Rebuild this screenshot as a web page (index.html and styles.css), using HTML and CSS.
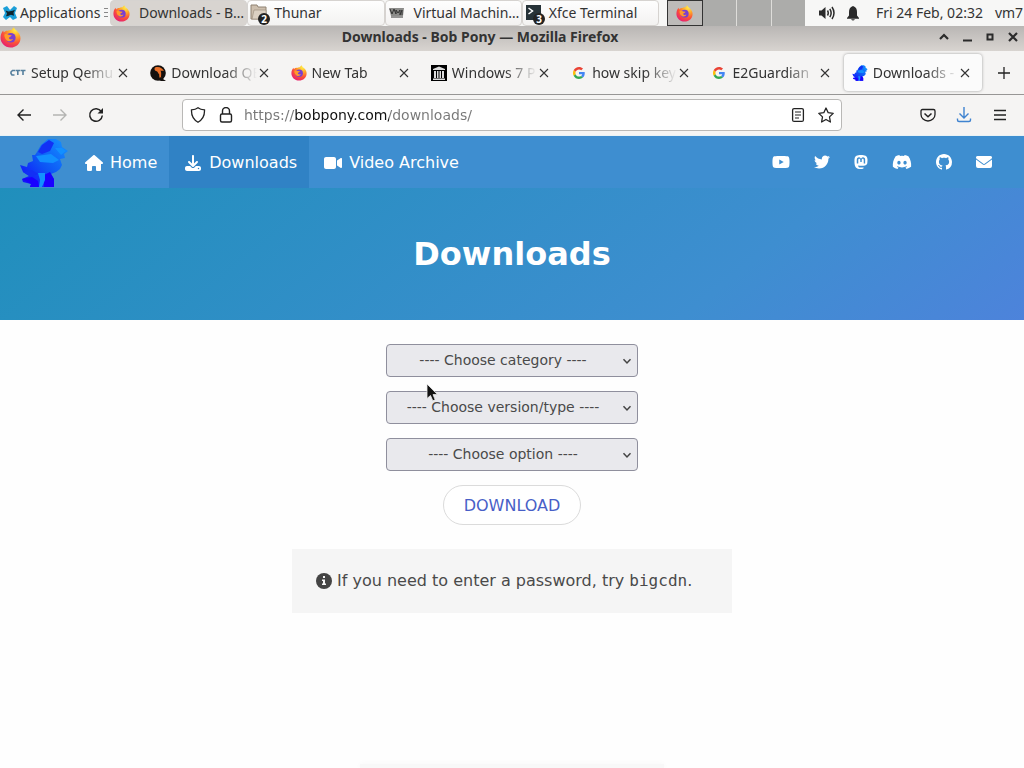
FILE: index.html
```html
<!DOCTYPE html>
<html lang="en">
<head>
<meta charset="utf-8">
<meta name="viewport" content="width=device-width, initial-scale=1">
<title>Downloads - Bob Pony</title>
<link rel="stylesheet" href="styles.css">
</head>
<body>
<svg class="defs" aria-hidden="true">
  <defs>
    <radialGradient id="fox" cx="75%" cy="12%" r="100%"><stop offset="0" stop-color="#fff14a"/><stop offset=".35" stop-color="#ffa428"/><stop offset=".65" stop-color="#fb5137"/><stop offset="1" stop-color="#e3197a"/></radialGradient>
    <linearGradient id="pony" x1="0" y1="1" x2="1" y2="0"><stop offset="0" stop-color="#1500ff"/><stop offset=".45" stop-color="#0d53f5"/><stop offset="1" stop-color="#1597ff"/></linearGradient>
    <symbol id="i-fox" viewBox="0 0 20 20">
      <path fill="url(#fox)" d="M10 19.5C4.5 19.500.5 15.300.5 10.300.5 7.500 1.500 5 3 3.300l.6 2C4.700 4 6 3.400 7.500 3.600 8.400 3 9.500 2.700 10.700 2.800L13.200.3c.6 2 2.200 2.700 3.600 4.200 1.700 1.800 2.700 3.900 2.700 6.100 0 5-4 8.900-9.500 8.900z"/>
      <circle cx="10.300" cy="10.200" r="4.600" fill="#7a3fd0"/>
      <path fill="#ff9a2b" d="M4.200 7.200c1.200-.7 2.800-.6 4.300.4l2.700.3c-.4 1.300-2.400 1.600-2.600 2.400-.2 1.400 1.800 2 3.800 1-.8 2.300-3.600 3-5.500 1.700C5 12 4 9.500 4.200 7.200z"/>
    </symbol>
    <symbol id="i-pony" viewBox="0 0 48 50">
      <path fill="url(#pony)" d="M17 14 L21 7 L28 1 L36 1 L41 4 L42 9 L48 13 L44 16 L45 20 L40 21 L42 27 L40 31 L36 34 L31 36 L34 41 L34 49 L10 49 L11 46 L3 44 L2 41 L9 38 L3 34 L0 27 L7 29 L8 25 L13 23 L12 17 L15 17 Z"/>
      <path fill="#1a00ff" d="M24 37l6-3 4 7v8H24z M2 41l10-2 6 4 1 6h-9l1-3z"/>
      <path fill="#1230f5" d="M18 14l4-7 7-5 5 3-4 8-8 3z M3 34l9-2 6 4-7 3z"/>
      <path fill="#1290ff" d="M18 35l7 0 0 7-3 7h-3l1-7z M16 18l15-2 8 6-6 3-13-1z M35 10l7 0 4 3-5 4z"/>
    </symbol>
    <symbol id="i-google" viewBox="0 0 48 48">
      <path fill="#EA4335" d="M24 9.500c3.540 0 6.710 1.220 9.210 3.600l6.850-6.850C35.900 2.380 30.470 0 24 0 14.620 0 6.510 5.380 2.560 13.220l7.980 6.190C12.430 13.720 17.740 9.500 24 9.500z"/>
      <path fill="#4285F4" d="M46.980 24.550c0-1.570-.15-3.090-.38-4.550H24v9.020h12.940c-.58 2.960-2.260 5.480-4.780 7.180l7.730 6c4.510-4.180 7.090-10.360 7.090-17.650z"/>
      <path fill="#FBBC05" d="M10.530 28.590c-.48-1.450-.76-2.990-.76-4.590s.27-3.140.76-4.590l-7.980-6.190C.92 16.460 0 20.120 0 24c0 3.880.92 7.540 2.560 10.780l7.970-6.190z"/>
      <path fill="#34A853" d="M24 48c6.480 0 11.930-2.130 15.890-5.810l-7.730-6c-2.150 1.450-4.920 2.300-8.160 2.300-6.260 0-11.570-4.220-13.470-9.910l-7.980 6.190C6.510 42.620 14.620 48 24 48z"/>
    </symbol>
    <symbol id="i-x" viewBox="0 0 10 10"><path d="M1 1l8 8M9 1l-8 8" fill="none" stroke="currentColor" stroke-width="1.100"/></symbol>
    <symbol id="i-chev" viewBox="0 0 10 10"><path d="M1.500 3.200L5 7l3.500-3.800" fill="none" stroke="#444" stroke-width="1.500"/></symbol>
  </defs>
</svg>

<div class="panel">
  <button class="apps"><svg width="16" height="16" viewBox="0 0 16 16"><path fill="#1b9fd8" d="M1 3l4-2 3 4 4-4 3 2-2 5 2 5-4 2-3-3-4 3-3-3 2-4z"/><path fill="#10242c" d="M3.500 5.500l3 1 4-.8 2.500-.9-1.500 3 .5 3-3-1-3 1.200-2 .2 1-2.700z"/></svg><span>Applications</span><i class="grip"></i></button>
  <div class="tasks">
    <button class="task on"><svg width="17" height="17"><use href="#i-fox"/></svg><span>Downloads - B…</span></button>
    <button class="task folder"><svg width="20" height="24" viewBox="0 0 20 24"><path d="M1 4h6l1 2h8v12H1z" fill="#cdbfae" stroke="#8f8272"/><path d="M4 9h12v9H2z" fill="#dbd0c2" stroke="#9d907f" stroke-width=".7"/><circle cx="14" cy="18" r="6" fill="#222"/><text x="14" y="22" text-anchor="middle" class="badge">2</text></svg><span>Thunar</span></button>
    <button class="task"><svg width="17" height="12" viewBox="0 0 17 12"><path fill="#8b8b89" d="M1 1h15l-1 8H3z"/><path d="M2 2l2 5 2-5 2 5V3l2 3 2-3v5l2-5v5M3 10h12" fill="none" stroke="#333"/></svg><span>Virtual Machin…</span></button>
    <button class="task folder"><svg width="20" height="24" viewBox="0 0 20 24"><rect x="1" y="4" width="15" height="15" fill="#263238"/><path d="M3.500 7l4 3-4 3" fill="none" stroke="#fff" stroke-width="1.500"/><circle cx="14" cy="18" r="6" fill="#222"/><text x="14" y="22" text-anchor="middle" class="badge">3</text></svg><span>Xfce Terminal</span></button>
  </div>
  <div class="pager"><button class="ws cur" aria-label="Workspace 1"><svg width="17" height="17"><use href="#i-fox"/></svg></button><button class="ws" aria-label="Workspace 2"></button><button class="ws" aria-label="Workspace 3"></button><button class="ws" aria-label="Workspace 4"></button></div>
  <div class="tray">
    <svg width="16" height="14" viewBox="0 0 16 14"><path fill="#2b2b2b" d="M0 4.500h2.500L6.500 1v12l-4-3.500H0z"/><path d="M8.500 4.500q1.500 2.500 0 5M10.800 2.800q2.700 4.200 0 8.400M13 1q4 6 0 12" fill="none" stroke="#2b2b2b" stroke-width="1.500"/></svg>
    <svg width="12" height="15" viewBox="0 0 12 15"><path fill="#2b2b2b" d="M6 0c3 1 4 3 4 6v3.500L12 12v.8H0V12l2-2.500V6c0-3 1-5 4-6zM4 13.300h4q-2 2.500-4 0z"/></svg>
    <time>Fri 24 Feb, 02:32</time><span>vm7</span>
  </div>
</div>

<header class="titlebar">
  <svg width="21" height="21"><use href="#i-fox"/></svg>
  <span class="title">Downloads - Bob Pony — Mozilla Firefox</span>
  <div class="winbtns">
    <button aria-label="Shade"><svg width="10" height="10" viewBox="0 0 10 10"><path d="M1 7l4-4 4 4" fill="none" stroke="#2b2b2b" stroke-width="2.200"/></svg></button>
    <button aria-label="Minimize"><svg width="10" height="10" viewBox="0 0 10 10"><path d="M1 8.500h9" stroke="#2b2b2b" stroke-width="2"/></svg></button>
    <button aria-label="Maximize"><svg width="10" height="10" viewBox="0 0 10 10"><path d="M2.500 2.500h5v5h-5z" fill="none" stroke="#2b2b2b" stroke-width="2"/></svg></button>
    <button aria-label="Close"><svg width="10" height="10" viewBox="0 0 10 10"><path d="M1 1l8 8M9 1l-8 8" stroke="#2b2b2b" stroke-width="2.200"/></svg></button>
  </div>
</header>

<nav class="tabbar" aria-label="Tabs">
  <div class="tab"><svg width="16" height="16" viewBox="0 0 16 16"><path d="M5 5.500H2.500L1 7v1.500L2 10h2.500M5.500 5.500H10M7.800 5.500V10M10.500 5.500h5M13 5.500V10" fill="none" stroke="#557f9d" stroke-width="1.600"/></svg><span>Setup Qemu</span><button aria-label="Close tab"><svg width="10" height="10"><use href="#i-x"/></svg></button></div>
  <div class="tab"><svg width="16" height="16" viewBox="0 0 16 16"><circle cx="8" cy="8" r="7.800" fill="#14100e"/><path fill="#e8702a" d="M5 2.500c4-1.500 7.500.5 9 3.500-1.500-.5-2.500 0-3.500-.5 1 2 .8 4 .5 6 0 2 1 3 1 3.500-2.500-1-3-3.500-2.800-5.500C8 8 8 6.500 6 6 4.500 5.500 4 3.500 5 2.500z"/><path d="M9 15l1-3 6 4h-5z" fill="#14100e"/></svg><span>Download QE</span><button aria-label="Close tab"><svg width="10" height="10"><use href="#i-x"/></svg></button></div>
  <div class="tab"><svg width="16" height="16"><use href="#i-fox"/></svg><span>New Tab</span><button aria-label="Close tab"><svg width="10" height="10"><use href="#i-x"/></svg></button></div>
  <div class="tab"><svg width="16" height="16" viewBox="0 0 16 16"><path d="M0 0h16v16H0z"/><path d="M2 4l6-2.500L14 4v1H2zM3 6h2v7H3zM6 6h1.500v7H6zM8.500 6H10v7H8.500zM11 6h2v7h-2zM2 13.500h12V15H2z" fill="#ddd"/></svg><span>Windows 7 P</span><button aria-label="Close tab"><svg width="10" height="10"><use href="#i-x"/></svg></button></div>
  <div class="tab"><svg class="g" width="12" height="12"><use href="#i-google"/></svg><span>how skip key</span><button aria-label="Close tab"><svg width="10" height="10"><use href="#i-x"/></svg></button></div>
  <div class="tab"><svg class="g" width="12" height="12"><use href="#i-google"/></svg><span>E2Guardian</span><button aria-label="Close tab"><svg width="10" height="10"><use href="#i-x"/></svg></button></div>
  <div class="tab active"><svg width="16" height="16"><use href="#i-pony"/></svg><span>Downloads -</span><button aria-label="Close tab"><svg width="10" height="10"><use href="#i-x"/></svg></button></div>
  <button class="newtab" aria-label="New tab"><svg width="12" height="12" viewBox="0 0 12 12"><path d="M6 0v12M0 6h12" stroke="#222" stroke-width="1.300"/></svg></button>
</nav>

<div class="toolbar">
  <div class="side">
    <button aria-label="Back"><svg width="16" height="16" viewBox="0 0 16 16"><path d="M15 8H2M7.500 2.500L2 8l5.500 5.500" fill="none" stroke="#222" stroke-width="1.400"/></svg></button>
    <button aria-label="Forward"><svg width="16" height="16" viewBox="0 0 16 16"><path d="M1 8h13M8.500 2.500L14 8l-5.500 5.500" fill="none" stroke="#b4b4b2" stroke-width="1.400"/></svg></button>
    <button aria-label="Reload"><svg width="16" height="16" viewBox="0 0 16 16"><path d="M13.300 4.500A6.300 6.300 0 1 0 14.300 8.500" fill="none" stroke="#222" stroke-width="1.500"/><path d="M15 1v5.500H9.500z" fill="#222"/></svg></button>
  </div>
  <div class="urlbar">
    <svg width="16" height="16" viewBox="0 0 16 16"><path d="M8 .8c2 1.700 4.300 2 6.500 2 .3 6-2 10-6.500 12.400C3.500 12.800 1.200 8.800 1.500 2.800c2.200 0 4.500-.3 6.500-2z" fill="none" stroke="#222" stroke-width="1.300"/></svg>
    <svg width="16" height="16" viewBox="0 0 16 16"><path d="M4.500 7V4a3.500 3.500 0 0 1 7 0v3" fill="none" stroke="#222" stroke-width="1.400"/><rect x="2.500" y="7" width="11" height="8" rx="1.500" fill="none" stroke="#222" stroke-width="1.400"/></svg>
    <input type="text" aria-label="Address" value="https://bobpony.com/downloads/">
    <svg width="16" height="16" viewBox="0 0 16 16"><rect x="2.600" y="1.600" width="10.800" height="12.800" rx="1.500" fill="none" stroke="#222" stroke-width="1.300"/><path d="M5 5h6M5 8h6M5 11h4" stroke="#222" stroke-width="1.200"/></svg>
    <svg width="16" height="16" viewBox="0 0 16 16"><path d="M8 1l2.200 4.700 5 .7-3.700 3.500.9 5.100L8 12.500 3.600 15l.9-5.100L.8 6.400l5-.7z" fill="none" stroke="#222" stroke-width="1.300" stroke-linejoin="round"/></svg>
  </div>
  <div class="side end">
    <button aria-label="Pocket"><svg width="16" height="16" viewBox="0 0 16 16"><path d="M2.500 2.500h11q1.500 0 1.500 1.500v3.500a7 6.500 0 0 1-14 0V4q0-1.500 1.500-1.500z" fill="none" stroke="#222" stroke-width="1.300"/><path d="M4.500 6.500L8 9.800l3.500-3.300" fill="none" stroke="#222" stroke-width="1.500"/></svg></button>
    <button aria-label="Downloads panel"><svg width="16" height="16" viewBox="0 0 16 16"><path d="M8 0v11M3.500 6.500L8 11l4.500-4.500M1.500 11.500v1.500q0 1.500 1.500 1.500h10q1.500 0 1.500-1.500v-1.500" fill="none" stroke="#3f83d0" stroke-width="1.400"/></svg></button>
    <button aria-label="Menu"><svg width="16" height="16" viewBox="0 0 16 16"><path d="M2 3.500h12M2 8h12M2 12.500h12" stroke="#222" stroke-width="1.300"/></svg></button>
  </div>
</div>

<div class="page">
  <nav class="navbar" aria-label="Site">
    <a href="#" class="brand" aria-label="Bob Pony"><svg width="48" height="50"><use href="#i-pony"/></svg></a>
    <a href="#" class="item"><svg width="18" height="16" viewBox="0 0 576 512"><path fill="currentColor" d="M575.800 255.500c0 18-15 32.100-32 32.100h-32l.7 160.200c0 2.700-.2 5.400-.5 8.100V472c0 22.100-17.900 40-40 40H392c-22.100 0-40-17.900-40-40V384c0-17.700-14.300-32-32-32H256c-17.700 0-32 14.300-32 32v88c0 22.100-17.900 40-40 40H104c-22.100 0-40-17.900-40-40V287.600H32c-18 0-32-14-32-32.100 0-9 3-17 10-24L266.400 8c7-7 15-8 22-8s15 2 21 7L564.800 231.500c8 7 12 15 11 24z"/></svg>Home</a>
    <a href="#" class="item current"><svg width="16" height="16" viewBox="0 0 512 512"><path fill="currentColor" d="M288 32c0-17.700-14.300-32-32-32s-32 14.300-32 32V274.700l-73.400-73.400c-12.500-12.500-32.800-12.500-45.300 0s-12.500 32.800 0 45.300l128 128c12.500 12.500 32.800 12.500 45.300 0l128-128c12.500-12.500 12.500-32.800 0-45.300s-32.800-12.500-45.300 0L288 274.700V32zM64 352c-35.300 0-64 28.700-64 64v32c0 35.300 28.700 64 64 64H448c35.300 0 64-28.700 64-64V416c0-35.300-28.700-64-64-64H346.500l-45.300 45.300c-25 25-65.500 25-90.500 0L165.500 352H64zm368 56a24 24 0 1 1 0 48 24 24 0 1 1 0-48z"/></svg>Downloads</a>
    <a href="#" class="item video"><svg width="18" height="16" viewBox="0 0 576 512"><path fill="currentColor" d="M0 128C0 92.700 28.700 64 64 64H320c35.300 0 64 28.700 64 64V384c0 35.300-28.700 64-64 64H64c-35.300 0-64-28.700-64-64V128zM559.100 99.800c10.400 5.600 16.900 16.400 16.900 28.200V384c0 11.800-6.500 22.600-16.900 28.200s-23 5-32.900-1.600l-96-64L416 337.100V174.900l14.200-9.500 96-64c9.800-6.500 22.400-7.200 32.900-1.600z"/></svg>Video Archive</a>
    <div class="social">
      <a href="#" aria-label="YouTube"><svg width="18" height="16" viewBox="0 0 576 512"><path fill="currentColor" d="M549.655 124.083c-6.281-23.650-24.787-42.276-48.284-48.597C458.781 64 288 64 288 64S117.220 64 74.629 75.486c-23.497 6.322-42.003 24.947-48.284 48.597-11.412 42.867-11.412 132.305-11.412 132.305s0 89.438 11.412 132.305c6.281 23.650 24.787 41.500 48.284 47.821C117.220 448 288 448 288 448s170.780 0 213.371-11.486c23.497-6.321 42.003-24.171 48.284-47.821 11.412-42.867 11.412-132.305 11.412-132.305s0-89.438-11.412-132.305zm-317.510 213.508V175.185l142.739 81.205-142.739 81.201z"/></svg></a>
      <a href="#" aria-label="Twitter"><svg width="16" height="16" viewBox="0 0 512 512"><path fill="currentColor" d="M459.370 151.716c.325 4.548.325 9.097.325 13.645 0 138.720-105.583 298.558-298.558 298.558-59.452 0-114.680-17.219-161.137-47.106 8.447.974 16.568 1.299 25.340 1.299 49.055 0 94.213-16.568 130.274-44.832-46.132-.975-84.792-31.188-98.112-72.772 6.498.974 12.995 1.624 19.818 1.624 9.421 0 18.843-1.300 27.614-3.573-48.081-9.747-84.143-51.980-84.143-102.985v-1.299c13.969 7.797 30.214 12.670 47.431 13.319-28.264-18.843-46.781-51.005-46.781-87.391 0-19.492 5.197-37.360 14.294-52.954 51.655 63.675 129.300 105.258 216.365 109.807-1.624-7.797-2.599-15.918-2.599-24.040 0-57.828 46.782-104.934 104.934-104.934 30.213 0 57.502 12.670 76.670 33.137 23.715-4.548 46.456-13.320 66.599-25.340-7.798 24.366-24.366 44.833-46.132 57.827 21.117-2.273 41.584-8.122 60.426-16.243-14.292 20.791-32.161 39.308-52.628 54.253z"/></svg></a>
      <a href="#" aria-label="Mastodon"><svg width="14" height="16" viewBox="0 0 448 512"><path fill="currentColor" d="M433 179.110c0-97.200-63.710-125.700-63.710-125.700-62.520-28.700-228.560-28.400-290.480 0 0 0-63.720 28.500-63.720 125.700 0 115.700-6.600 259.400 105.630 289.100 40.510 10.700 75.320 13 103.330 11.400 50.810-2.800 79.320-18.100 79.320-18.100l-1.700-36.900s-36.310 11.400-77.120 10.100c-40.410-1.400-83-4.400-89.630-54a102.540 102.540 0 0 1-.9-13.900c85.630 20.900 158.650 9.100 178.750 6.700 56.120-6.700 105-41.300 111.230-72.900 9.800-49.800 9-121.500 9-121.500zm-75.120 125.200h-46.630v-114.200c0-49.700-64-51.600-64 6.900v62.500h-46.330V197c0-58.500-64-56.600-64-6.900v114.200H90.190c0-122.100-5.200-147.900 18.410-175 25.900-28.900 79.820-30.800 103.830 6.100l11.600 19.500 11.600-19.500c24.110-37.100 78.120-34.800 103.830-6.100 23.710 27.300 18.400 53 18.400 175z"/></svg></a>
      <a href="#" aria-label="Discord"><svg width="20" height="16" viewBox="0 0 640 512"><path fill="currentColor" d="M524.500 69.800A485 485 0 0 0 404 32q-9 13-17 31.500a448 448 0 0 0-134.400 0Q246 47 236 32A484 484 0 0 0 116 69.100C39 183.700 18.200 294.700 28.400 404.400A488 488 0 0 0 177 480q18-22 31-49.600a321 321 0 0 1-47-25l11-10c96.200 43.900 200.400 43.900 295.500 0l11 10q-22 14-47 25 14 27 31 49.600A486 486 0 0 0 611 405C623.700 277.600 591 167.500 524.500 69.800ZM222.500 337.600c-29 0-52.900-26.600-52.900-59.300s23.400-59.200 52.900-59.200 53.300 26.800 52.800 59.200c0 32.700-23.400 59.300-52.800 59.300Zm195.400 0c-29 0-52.900-26.600-52.900-59.300s23.400-59.200 52.900-59.200 53.300 26.800 52.800 59.200c0 32.700-23.200 59.300-52.800 59.300Z"/></svg></a>
      <a href="#" aria-label="GitHub"><svg width="16" height="16" viewBox="0 0 16 16"><path fill="currentColor" d="M8 0C3.580 0 0 3.580 0 8c0 3.540 2.290 6.530 5.470 7.590.4.070.55-.17.55-.38 0-.19-.01-.82-.01-1.490-2.010.37-2.530-.49-2.690-.94-.09-.23-.48-.94-.82-1.130-.28-.15-.68-.52-.01-.53.63-.01 1.080.58 1.230.82.72 1.210 1.870.87 2.330.66.070-.52.28-.87.51-1.070-1.780-.2-3.640-.89-3.640-3.950 0-.87.31-1.590.82-2.150-.08-.2-.36-1.020.080-2.120 0 0 .67-.21 2.200.82.64-.18 1.320-.27 2-.27s1.360.090 2 .27c1.530-1.040 2.200-.82 2.200-.82.44 1.100.16 1.920.080 2.120.51.56.82 1.270.82 2.150 0 3.070-1.870 3.750-3.650 3.950.29.25.54.73.54 1.480 0 1.070-.01 1.930-.01 2.200 0 .21.15.46.55.38A8.010 8.010 0 0 0 16 8c0-4.420-3.580-8-8-8z"/></svg></a>
      <a href="#" aria-label="Email"><svg width="16" height="16" viewBox="0 0 16 16"><path fill="currentColor" d="M1.500 2h13A1.500 1.500 0 0 1 15.400 4.700L8.600 9.800q-.6.400-1.200 0L.6 4.700A1.500 1.500 0 0 1 1.500 2zM0 5.500l6.800 5.100q1.200.8 2.400 0L16 5.500V12q0 2-2 2H2q-2 0-2-2z"/></svg></a>
    </div>
  </nav>
  <section class="hero"><h1>Downloads</h1></section>
  <main class="content">
    <form class="chooser">
      <div class="pick"><select aria-label="Category"><option>---- Choose category ----</option></select><svg width="10" height="10"><use href="#i-chev"/></svg></div>
      <div class="pick"><select aria-label="Version or type"><option>---- Choose version/type ----</option></select><svg width="10" height="10"><use href="#i-chev"/></svg>
        <svg class="pointer" width="12" height="19" viewBox="0 0 12 19"><path d="M1 1v14.500l3.500-3 2.300 5.300 2.400-1L7 11.600h4.500z" fill="#111" stroke="#eee" stroke-width=".8"/></svg>
      </div>
      <div class="pick"><select aria-label="Option"><option>---- Choose option ----</option></select><svg width="10" height="10"><use href="#i-chev"/></svg></div>
      <button type="button" class="download">DOWNLOAD</button>
    </form>
    <p class="note"><svg width="16" height="16" viewBox="0 0 16 16"><circle cx="8" cy="8" r="8" fill="#444"/><path d="M7 3h2v2H7zM6 6.500h3v4h1V12H6v-1.500h1V8H6z" fill="#f5f5f5"/></svg><span>If you need to enter a password, try <code>bigcdn</code>.</span></p>
    <div class="edge"></div>
  </main>
</div>
</body>
</html>
```
FILE: styles.css
```css
* { box-sizing: border-box; }
body {
  margin: 0;
  min-height: 100vh;
  display: flex;
  flex-direction: column;
  font: 14px/20px "Noto Sans", sans-serif;
  color: #333;
  background: #fefefe;
}
button {
  margin: 0;
  padding: 0;
  border: 0;
  background: none;
  font: inherit;
  color: inherit;
}
svg { display: block; flex: none; }
.defs { position: absolute; width: 0; height: 0; }

/* desktop panel */
.panel {
  display: flex;
  height: 26px;
  background: #f7f7f6;
  white-space: nowrap;
  overflow: hidden;
}
.apps { display: flex; align-items: center; gap: 2px; width: 110px; padding-left: 2px; }
.grip { width: 4px; height: 10px; margin-left: 2px; background: repeating-linear-gradient(#888 0 1px, transparent 1px 4px); }
.tasks { display: flex; width: 549px; margin-right: 8px; }
.task {
  flex: 1;
  min-width: 0;
  display: flex;
  align-items: center;
  gap: 9px;
  padding: 0 2px;
  border: 1px solid #d6d3d0;
  border-radius: 4px;
  background: linear-gradient(#fefefe, #f3f2f1);
}
.task.on { background: #d8d4d0; }
.task.folder { gap: 4px; }
.badge { font: bold 10px "Noto Sans", sans-serif; fill: #fff; }
.pager { display: flex; width: 138px; background: #acacaa; }
.ws { flex: 1; border-right: 1px solid #deddda; }
.ws:last-child { border-right: 0; }
.ws.cur { display: grid; place-items: center; border: 1px solid #333; background: #bdbbb9; }
.tray { display: flex; align-items: center; gap: 12px; padding-left: 14px; }
.tray time { margin-left: 5px; }

.titlebar {
  display: flex;
  align-items: center;
  height: 25px;
  padding: 0 6px 3px 0;
  background: linear-gradient(#b9b6b4, #d8d4d0);
  font-weight: bold;
}
.title { flex: 1; text-align: center; }
.winbtns { display: flex; gap: 13px; }

/* browser tabs */
.tabbar {
  display: flex;
  align-items: center;
  height: 44px;
  padding-left: 2px;
  border-bottom: 1px solid #979695;
  background: #f5f4f3;
}
.tab {
  flex: 1;
  min-width: 0;
  display: flex;
  align-items: center;
  gap: 5px;
  height: 37px;
  margin-right: 2px;
  padding: 0 12px 0 8px;
  border-radius: 4px;
}
.tab span {
  flex: 1;
  min-width: 0;
  margin-right: -3px;
  overflow: hidden;
  white-space: nowrap;
  mask-image: linear-gradient(to left, transparent, #000 32px);
}
.tab .g { margin: 0 2px; }
.tab.active { background: #fbfbfb; box-shadow: 0 0 3px #999; }
.newtab { display: grid; place-items: center; width: 40px; height: 37px; }

.toolbar { display: flex; align-items: center; height: 41px; background: #f5f4f3; border-bottom: 1px solid #e8f2f5; }
.side { display: flex; gap: 20px; width: 182px; padding-left: 16px; }
.side.end { justify-content: flex-end; padding: 0 16px 0 0; }
.urlbar {
  flex: 1;
  display: flex;
  align-items: center;
  gap: 12px;
  height: 32px;
  padding: 0 7px;
  border: 1px solid #b9b8b6;
  border-radius: 4px;
  background: #fff;
}
.urlbar input {
  flex: 1;
  min-width: 0;
  margin-left: -2px;
  padding: 0;
  border: 0;
  outline: 0;
  font: 14px/20px "DejaVu Sans", sans-serif;
  color: transparent;
  background: linear-gradient(to right, #777 50px, #111 50px 145px, #777 145px);
  background-clip: text;
  -webkit-background-clip: text;
}

/* web page */
.page {
  flex: 1;
  display: flex;
  flex-direction: column;
  font-family: "DejaVu Sans", sans-serif;
  font-size: 16px;
  line-height: 24px;
}
.navbar { display: flex; min-height: 52px; background: #3e8ed0; color: #fff; }
.navbar a { display: flex; align-items: center; color: inherit; text-decoration: none; }
.brand { padding: 2px 5px 0 20px; }
.item { gap: 7px; padding: 1px 12px 0; }
.navbar .current { gap: 8px; padding-left: 16px; background: #3082c5; }
.navbar .video { padding-left: 15px; }
.social { display: flex; gap: 24px; margin-left: auto; padding-right: 32px; }
.hero {
  padding: 48px 24px;
  background: linear-gradient(141deg, #208fbc 0%, #3e8ed0 71%, #4d83db 100%);
  color: #fff;
  text-align: center;
}
h1 { margin: 0; font-size: 32px; line-height: 36px; }
.content { flex: 1; display: flex; flex-direction: column; align-items: center; padding-top: 24px; }
.chooser { display: flex; flex-direction: column; align-items: center; gap: 14px; }
.pick { position: relative; display: flex; align-items: center; }
.pick > svg { position: absolute; right: 6px; pointer-events: none; }
.pick > .pointer { left: 40px; right: auto; top: -8px; }
select {
  appearance: none;
  width: 252px;
  height: 33px;
  padding: 0 22px 2px 4px;
  border: 1px solid #8f8f9d;
  border-radius: 4px;
  background: #e9e9ed;
  color: #4a4a4a;
  font: 14px/20px "DejaVu Sans", sans-serif;
  text-align: center;
  text-align-last: center;
}
.download {
  padding: 8px 20px 6px;
  border: 1px solid #dbdbdb;
  border-radius: 20px;
  background: #fff;
  color: #485fc7;
}
.note {
  display: flex;
  align-items: center;
  gap: 5px;
  width: 440px;
  max-width: 100%;
  margin: 24px 0;
  padding: 20px 24px;
  background: #f5f5f5;
  color: #4a4a4a;
}
code { font: 16px/24px "DejaVu Sans Mono", monospace; }
.edge { width: 304px; height: 4px; margin-top: auto; background: #f8f8f8; box-shadow: 0 0 6px #f6f6f6; }
```
